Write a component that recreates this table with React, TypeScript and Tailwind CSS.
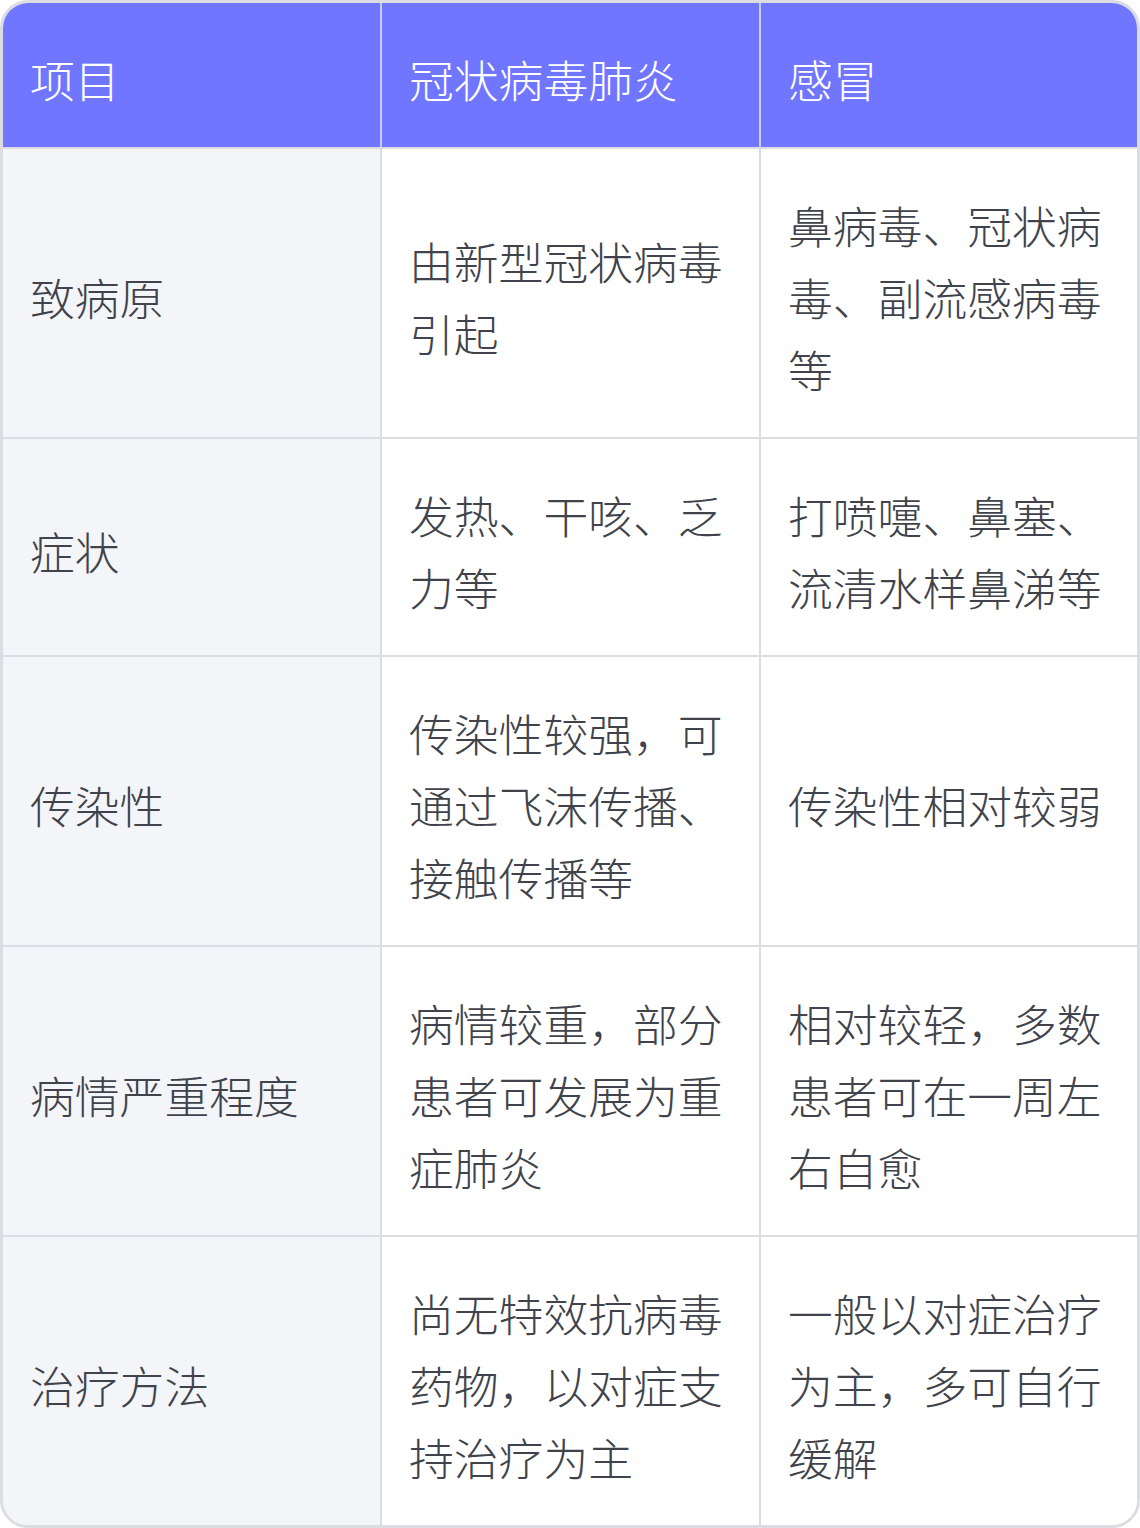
const rows: [string, string, string][] = [
  ["致病原", "由新型冠状病毒引起", "鼻病毒、冠状病毒、副流感病毒等"],
  ["症状", "发热、干咳、乏力等", "打喷嚏、鼻塞、流清水样鼻涕等"],
  ["传染性", "传染性较强，可通过飞沫传播、接触传播等", "传染性相对较弱"],
  ["病情严重程度", "病情较重，部分患者可发展为重症肺炎", "相对较轻，多数患者可在一周左右自愈"],
  ["治疗方法", "尚无特效抗病毒药物，以对症支持治疗为主", "一般以对症治疗为主，多可自行缓解"],
];

const headers = ["项目", "冠状病毒肺炎", "感冒"];

export default function App() {
  return (
    <div
      className="w-[1140px] bg-white"
      style={{ fontFamily: '"Noto Sans CJK SC", "Noto Sans", sans-serif' }}
    >
      <div className="overflow-hidden rounded-[28px] border-[3px] border-[#dcdde2]">
        <div className="grid grid-cols-[379px_379px_1fr] text-[44.8px] font-light leading-[72px]">
          {headers.map((h, i) => (
            <div
              key={h}
              className={`border-b-2 border-[#dcdde2] bg-[#7076ff] pl-[27px] pr-[26px] pt-[40px] pb-[32px] text-white ${
                i < 2 ? "border-r-2 border-r-[#c9cbf0]" : ""
              }`}
            >
              {h}
            </div>
          ))}
          {rows.map((r, ri) =>
            r.map((c, ci) => (
              <div
                key={`${ri}-${ci}`}
                className={`flex items-center pl-[27px] pr-[26px] pt-[40px] pb-[32px] text-[#40434b] ${
                  ri < rows.length - 1 ? "border-b-2" : ""
                } ${ci < 2 ? "border-r-2" : ""} border-[#dcdde2] ${
                  ci === 0 ? "bg-[#f4f5f9]" : "bg-white"
                }`}
              >
                <span>{c}</span>
              </div>
            ))
          )}
        </div>
      </div>
    </div>
  );
}
